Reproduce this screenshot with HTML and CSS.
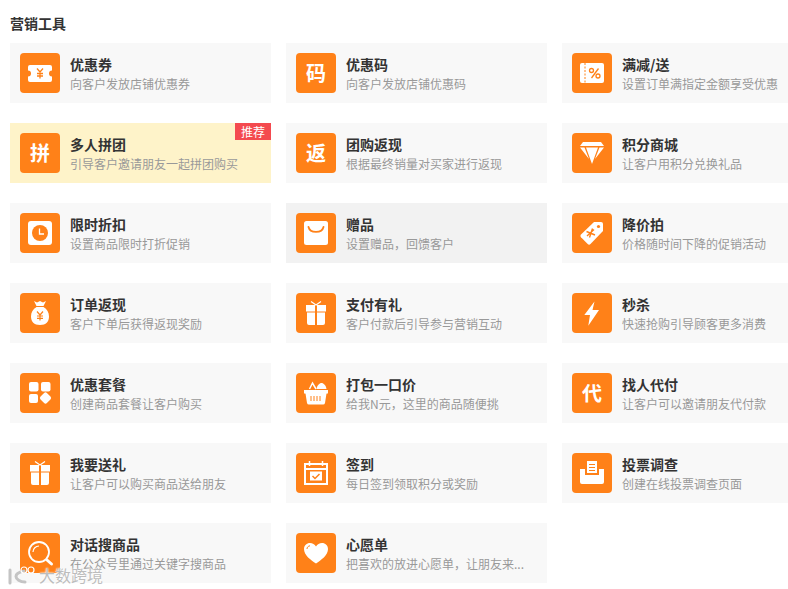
FILE: index.html
```html
<!DOCTYPE html>
<html>
  <head>
    <title>营销工具</title>
    <meta charset="UTF-8" />
    <link rel="stylesheet" href="styles.css">
  </head>
  <body>
    <div class="wrapper">
      <h3 class="section-title">营销工具</h3>
      <div class="tools">

        <div class="tool">
          <div class="icon">
            <svg viewBox="0 0 40 40"><path fill="#fff" d="M10 12h20a2 2 0 0 1 2 2v3.500a3 3 0 0 0 0 6V27a2 2 0 0 1-2 2H10a2 2 0 0 1-2-2v-3.500a3 3 0 0 0 0-6V14a2 2 0 0 1 2-2z"/><path fill="none" stroke="#ff8118" stroke-width="1.300" d="M17 15.500l3 3.500 3-3.500M20 19v6.500M17 20.500h6M17 23h6"/></svg>
          </div>
          <div class="text"><div class="name">优惠券</div><div class="desc">向客户发放店铺优惠券</div></div>
        </div>

        <div class="tool">
          <div class="icon">码</div>
          <div class="text"><div class="name">优惠码</div><div class="desc">向客户发放店铺优惠码</div></div>
        </div>

        <div class="tool">
          <div class="icon">
            <svg viewBox="0 0 40 40"><rect fill="#fff" x="8" y="10" width="24" height="20" rx="2"/><path stroke="#ff8118" stroke-width="1" stroke-dasharray="2 1.500" d="M13 10v20"/><circle cx="19.500" cy="17.500" r="2" fill="none" stroke="#ff8118" stroke-width="1.300"/><circle cx="26" cy="23" r="2" fill="none" stroke="#ff8118" stroke-width="1.300"/><path stroke="#ff8118" stroke-width="1.300" d="M26.500 15.500l-7 9.500"/></svg>
          </div>
          <div class="text"><div class="name">满减/送</div><div class="desc">设置订单满指定金额享受优惠</div></div>
        </div>

        <div class="tool tool-hot">
          <div class="icon">拼</div>
          <div class="text"><div class="name">多人拼团</div><div class="desc">引导客户邀请朋友一起拼团购买</div></div>
          <span class="badge">推荐</span>
        </div>

        <div class="tool">
          <div class="icon">返</div>
          <div class="text"><div class="name">团购返现</div><div class="desc">根据最终销量对买家进行返现</div></div>
        </div>

        <div class="tool">
          <div class="icon">
            <svg viewBox="0 0 40 40"><path fill="#fff" d="M11 9h18l3 4H8z"/><path fill="#fff" d="M8 14.500h4.500L17 26zM14 14.500h12L20 31zM27.500 14.500H32l-9 11.500z"/></svg>
          </div>
          <div class="text"><div class="name">积分商城</div><div class="desc">让客户用积分兑换礼品</div></div>
        </div>

        <div class="tool">
          <div class="icon">
            <svg viewBox="0 0 40 40"><rect fill="#fff" x="8" y="8" width="24" height="24" rx="3"/><circle cx="20" cy="20" r="8" fill="#ff8118"/><path fill="none" stroke="#fff" stroke-width="1.300" d="M19.500 15.500v5.500h4.500"/></svg>
          </div>
          <div class="text"><div class="name">限时折扣</div><div class="desc">设置商品限时打折促销</div></div>
        </div>

        <div class="tool tool-active">
          <div class="icon">
            <svg viewBox="0 0 40 40"><rect fill="#fff" x="8" y="8" width="24" height="24" rx="2.500"/><path fill="none" stroke="#ff8118" stroke-width="1.800" stroke-linecap="round" d="M12.500 14c1.500 6.500 13.500 6.500 15 0"/></svg>
          </div>
          <div class="text"><div class="name">赠品</div><div class="desc">设置赠品，回馈客户</div></div>
        </div>

        <div class="tool">
          <div class="icon">
            <svg viewBox="0 0 40 40"><path fill="#fff" d="M22 9h7a2 2 0 0 1 2 2v7L18.500 31a2 2 0 0 1-2.800 0L9 24.300a2 2 0 0 1 0-2.800z"/><circle cx="26.500" cy="13.500" r="1.600" fill="#ff8118"/><path fill="none" stroke="#ff8118" stroke-width="1.400" d="M20.500 15.500l-3 9M14.500 18.500l8.500 3.500M15 23l7-6.500"/></svg>
          </div>
          <div class="text"><div class="name">降价拍</div><div class="desc">价格随时间下降的促销活动</div></div>
        </div>

        <div class="tool">
          <div class="icon">
            <svg viewBox="0 0 40 40"><path fill="#fff" d="M14 8l3 1.500L20 8l3 1.500L26 8l-2.500 5h-7zM16.500 14h7c3.500 2 5.500 5.500 5.500 9.500 0 5-3 8.500-9 8.500s-9-3.500-9-8.500c0-4 2-7.500 5.500-9.500z"/><path fill="none" stroke="#ff8118" stroke-width="1.200" d="M17 18.500l3 3.500 3-3.500M20 22v5.500M17 23h6M17 25.300h6"/></svg>
          </div>
          <div class="text"><div class="name">订单返现</div><div class="desc">客户下单后获得返现奖励</div></div>
        </div>

        <div class="tool">
          <div class="icon">
            <svg viewBox="0 0 40 40"><path fill="#fff" d="M10 12h9v6.500h-9zM21 12h9v6.500h-9zM11 19.500h8V32h-6a2 2 0 0 1-2-2zM21 19.500h8V30a2 2 0 0 1-2 2h-6z"/><path fill="none" stroke="#fff" stroke-width="1.200" d="M15 8.500l5 3.500 5-3.500"/></svg>
          </div>
          <div class="text"><div class="name">支付有礼</div><div class="desc">客户付款后引导参与营销互动</div></div>
        </div>

        <div class="tool">
          <div class="icon">
            <svg viewBox="0 0 40 40"><path fill="#fff" d="M22.500 8.500L12.300 22H18l-1.700 10.700L27 17h-6.500z"/></svg>
          </div>
          <div class="text"><div class="name">秒杀</div><div class="desc">快速抢购引导顾客更多消费</div></div>
        </div>

        <div class="tool">
          <div class="icon">
            <svg viewBox="0 0 40 40"><rect fill="#fff" x="9" y="9" width="9.500" height="9.500" rx="2"/><rect fill="#fff" x="21" y="9" width="9.500" height="9.500" rx="2"/><rect fill="#fff" x="9" y="21" width="9" height="9" rx="2"/><rect fill="#fff" x="21" y="20.500" width="9" height="9" rx="2" transform="rotate(45 25.500 25)"/></svg>
          </div>
          <div class="text"><div class="name">优惠套餐</div><div class="desc">创建商品套餐让客户购买</div></div>
        </div>

        <div class="tool">
          <div class="icon">
            <svg viewBox="0 0 40 40"><path fill="#fff" d="M8 17h24v2.500a1 1 0 0 1-1.500 1L29 30a2 2 0 0 1-2 1.500H13a2 2 0 0 1-2-1.500l-1.500-9.500A1 1 0 0 1 8 19.500z"/><path fill="#fff" d="M20.500 16c.5-3.500 3-6 5-6s4.500 2.500 5 6z"/><path fill="none" stroke="#fff" stroke-width="1.500" d="M13.500 16l3-6 3.500 6"/><path stroke="#ff8118" stroke-width="1" d="M15 23v5M18 23v5M21 23v5M24 23v5"/></svg>
          </div>
          <div class="text"><div class="name">打包一口价</div><div class="desc">给我N元，这里的商品随便挑</div></div>
        </div>

        <div class="tool">
          <div class="icon">代</div>
          <div class="text"><div class="name">找人代付</div><div class="desc">让客户可以邀请朋友代付款</div></div>
        </div>

        <div class="tool">
          <div class="icon">
            <svg viewBox="0 0 40 40"><path fill="#fff" d="M10 12h9v6.500h-9zM21 12h9v6.500h-9zM11 19.500h8V32h-6a2 2 0 0 1-2-2zM21 19.500h8V30a2 2 0 0 1-2 2h-6z"/><path fill="none" stroke="#fff" stroke-width="1.200" d="M15 8.500l5 3.500 5-3.500"/></svg>
          </div>
          <div class="text"><div class="name">我要送礼</div><div class="desc">让客户可以购买商品送给朋友</div></div>
        </div>

        <div class="tool">
          <div class="icon">
            <svg viewBox="0 0 40 40"><path fill="none" stroke="#fff" stroke-width="2" d="M9 11h22v20H9z"/><path stroke="#fff" stroke-width="2" d="M8 16h24"/><path stroke="#fff" stroke-width="1.500" d="M13.500 8v5M26.500 8v5"/><rect fill="#fff" x="14" y="18.500" width="12" height="9"/><path fill="none" stroke="#ff8118" stroke-width="1.500" d="M16.500 23l2.500 2.500 4.500-4.500"/></svg>
          </div>
          <div class="text"><div class="name">签到</div><div class="desc">每日签到领取积分或奖励</div></div>
        </div>

        <div class="tool">
          <div class="icon">
            <svg viewBox="0 0 40 40"><path fill="#fff" d="M8 16h5v6h14v-6h5v13a2 2 0 0 1-2 2H10a2 2 0 0 1-2-2z"/><path fill="#fff" d="M15 8h10v12H15z"/><path stroke="#ff8118" stroke-width="1" d="M17 11.500h6M17 14.500h6M17 17.500h6"/></svg>
          </div>
          <div class="text"><div class="name">投票调查</div><div class="desc">创建在线投票调查页面</div></div>
        </div>

        <div class="tool">
          <div class="icon">
            <svg viewBox="0 0 40 40"><circle cx="19" cy="19" r="10" fill="none" stroke="#fff" stroke-width="1.800"/><path fill="none" stroke="#fff" stroke-width="1.200" d="M13 19a6 6 0 0 1 6-6"/><path stroke="#fff" stroke-width="3" stroke-linecap="round" d="M27 27l4.500 4"/></svg>
          </div>
          <div class="text"><div class="name">对话搜商品</div><div class="desc">在公众号里通过关键字搜商品</div></div>
        </div>

        <div class="tool">
          <div class="icon">
            <svg viewBox="0 0 40 40"><path fill="#fff" d="M20 30.500C15 27 8 22.500 8 16c0-3.500 2.700-6 6-6 2.500 0 4.700 1.300 6 3.500 1.300-2.200 3.500-3.500 6-3.500 3.300 0 6 2.500 6 6 0 6.500-7 11-12 14.500z"/><path fill="none" stroke="#ff8118" stroke-width="1" d="M11 16c0-1.700 1.200-3 3-3.200"/></svg>
          </div>
          <div class="text"><div class="name">心愿单</div><div class="desc">把喜欢的放进心愿单，让朋友来...</div></div>
        </div>

      </div>
    </div>

    <div class="watermark">
      <svg class="watermark-logo" viewBox="0 0 32 22"><path fill="none" stroke="#c4c4c4" stroke-width="3" stroke-linecap="round" d="M3 6v13M17 7c-5 1-8 3-8 5.500s4 5.500 9 5.500"/><circle cx="17" cy="6" r="3" fill="none" stroke="#fff" stroke-width="1.200"/><circle cx="24" cy="6" r="3" fill="none" stroke="#fff" stroke-width="1.200"/></svg>
      <span class="watermark-text">大数跨境</span>
    </div>
  </body>
</html>
```

FILE: styles.css
```css
html,
body {
  margin: 0;
  padding: 0;
  overflow: hidden;
  background: #fff;
}
body {
  font-family: "Noto Sans CJK SC", "Liberation Sans", sans-serif;
  color: #333;
  position: relative;
  height: 589px;
}
.wrapper {
  padding: 13px 0 0 10px;
}
.section-title {
  margin: 0 0 10px;
  font-size: 14px;
  line-height: 20px;
  font-weight: bold;
  color: #333;
}
.tools {
  display: grid;
  grid-template-columns: repeat(3, 261px);
  grid-auto-rows: 60px;
  column-gap: 15px;
  row-gap: 20px;
}
.tool {
  position: relative;
  display: flex;
  align-items: center;
  padding: 10px;
  background: #f8f8f8;
  box-sizing: border-box;
}
.tool-hot {
  background: #fef3c9;
}
.tool-active {
  background: #f2f2f2;
}
.icon {
  flex: none;
  width: 40px;
  height: 40px;
  margin-right: 10px;
  border-radius: 4px;
  background: #ff8118;
  color: #fff;
  font-size: 20px;
  font-weight: bold;
  line-height: 40px;
  text-align: center;
}
.icon svg {
  display: block;
  width: 40px;
  height: 40px;
}
.text {
  padding-top: 2px;
}
.name {
  font-size: 14px;
  line-height: 20px;
  font-weight: bold;
  color: #333;
}
.desc {
  font-size: 12px;
  line-height: 20px;
  color: #999;
  white-space: nowrap;
}
.badge {
  position: absolute;
  top: 0;
  right: 0;
  width: 36px;
  height: 17px;
  background: #f44a4f;
  color: #fff;
  font-size: 12px;
  line-height: 17px;
  text-align: center;
}
.watermark {
  position: absolute;
  left: 7px;
  top: 563px;
  display: flex;
  align-items: center;
}
.watermark-logo {
  width: 32px;
  height: 22px;
}
.watermark-text {
  font-size: 16px;
  line-height: 24px;
  color: #bdbdbd;
  text-shadow: 0 0 2px #fff, 0 0 2px #fff;
}
```
